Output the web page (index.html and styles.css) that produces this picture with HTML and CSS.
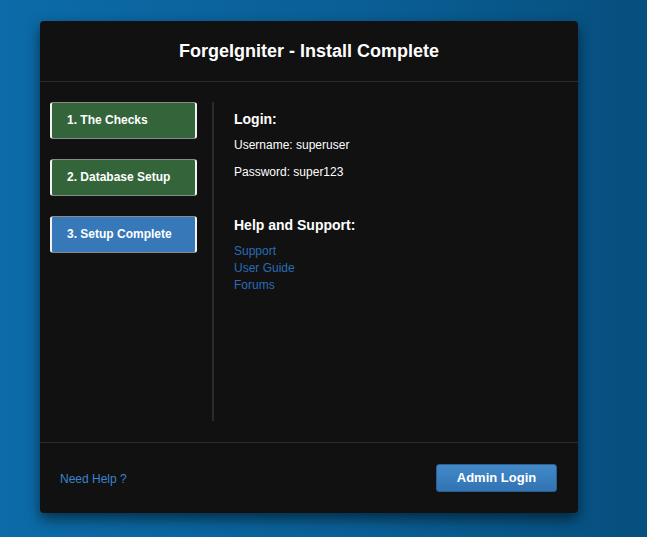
FILE: index.html
```html
<!DOCTYPE html>
<html>
<head>
<meta charset="utf-8">
<link rel="stylesheet" href="styles.css">
</head>
<body>
<div class="modal">
  <div class="modal-header">
    <h1 class="title">ForgeIgniter - Install Complete</h1>
  </div>
  <div class="modal-body">
    <div class="steps">
      <div class="step step-done">1. The Checks</div>
      <div class="step step-done">2. Database Setup</div>
      <div class="step step-active">3. Setup Complete</div>
    </div>
    <div class="divider"></div>
    <div class="content">
      <h3 class="heading">Login:</h3>
      <p class="info first">Username: superuser</p>
      <p class="info">Password: super123</p>
      <h3 class="heading help">Help and Support:</h3>
      <div class="links">
        <a class="link" href="#">Support</a>
        <a class="link" href="#">User Guide</a>
        <a class="link" href="#">Forums</a>
      </div>
    </div>
  </div>
  <div class="modal-footer">
    <a class="need-help" href="#">Need Help ?</a>
    <button class="admin-btn">Admin Login</button>
  </div>
</div>
</body>
</html>
```
FILE: styles.css
```css
html, body {
  margin: 0;
  padding: 0;
  height: 100%;
}
body {
  background: linear-gradient(to right, #0c6ba8 0%, #0a5f96 55%, #064f7e 100%);
  font-family: "Liberation Sans", Arial, sans-serif;
  padding: 21px 0 0 40px;
  box-sizing: border-box;
  overflow: hidden;
}
.modal {
  width: 538px;
  height: 492px;
  background: #111111;
  border-radius: 4px;
  box-shadow: 0 6px 14px rgba(0, 0, 0, 0.55);
  display: flex;
  flex-direction: column;
}
.modal-header {
  height: 60px;
  border-bottom: 1px solid #2c2c2c;
  display: flex;
  align-items: center;
  justify-content: center;
}
.title {
  margin: 0;
  color: #ffffff;
  font-size: 18px;
  font-weight: bold;
  line-height: 22px;
}
.modal-body {
  height: 361px;
  border-bottom: 1px solid #2c2c2c;
  display: flex;
  padding: 20px 0 21px 10px;
  box-sizing: border-box;
}
.steps {
  width: 147px;
  display: flex;
  flex-direction: column;
  gap: 20px;
}
.step {
  height: 37px;
  box-sizing: border-box;
  border-radius: 3px;
  border-style: solid;
  border-color: #8a8a8a #f2f2f2 #8a8a8a #f2f2f2;
  border-width: 1px 2px 1px 2px;
  color: #ffffff;
  font-size: 12px;
  font-weight: bold;
  display: flex;
  align-items: center;
  padding-left: 15px;
  padding-bottom: 2px;
}
.step-done {
  background: #33643a;
}
.step-active {
  background: #3779b8;
}
.divider {
  width: 2px;
  background: #2b2b2b;
  margin-left: 15px;
}
.content {
  padding-left: 20px;
  display: flex;
  flex-direction: column;
}
.heading {
  margin: 0;
  padding-top: 8px;
  color: #ffffff;
  font-size: 14px;
  font-weight: bold;
  line-height: 18px;
}
.info {
  margin: 9px 0 0 0;
  color: #ffffff;
  font-size: 12px;
  line-height: 17px;
}
.info + .info {
  margin-top: 10px;
}
.help {
  padding-top: 0;
  margin-top: 35px;
}
.links {
  display: flex;
  flex-direction: column;
  margin-top: 9px;
}
.link {
  color: #2a6cb7;
  font-size: 12px;
  line-height: 17px;
  text-decoration: none;
}
.modal-footer {
  flex: 1;
  display: flex;
  align-items: center;
  justify-content: space-between;
  padding: 0 21px 0 20px;
}
.need-help {
  color: #3a84cf;
  font-size: 12px;
  text-decoration: none;
  margin-top: 1px;
}
.admin-btn {
  width: 121px;
  height: 28px;
  border: 1px solid #2b5f93;
  border-radius: 3px;
  background: linear-gradient(to bottom, #4289c8, #3273b2);
  color: #ffffff;
  font-family: "Liberation Sans", Arial, sans-serif;
  font-size: 13px;
  font-weight: bold;
  padding: 0 0 1px 0;
}
```
